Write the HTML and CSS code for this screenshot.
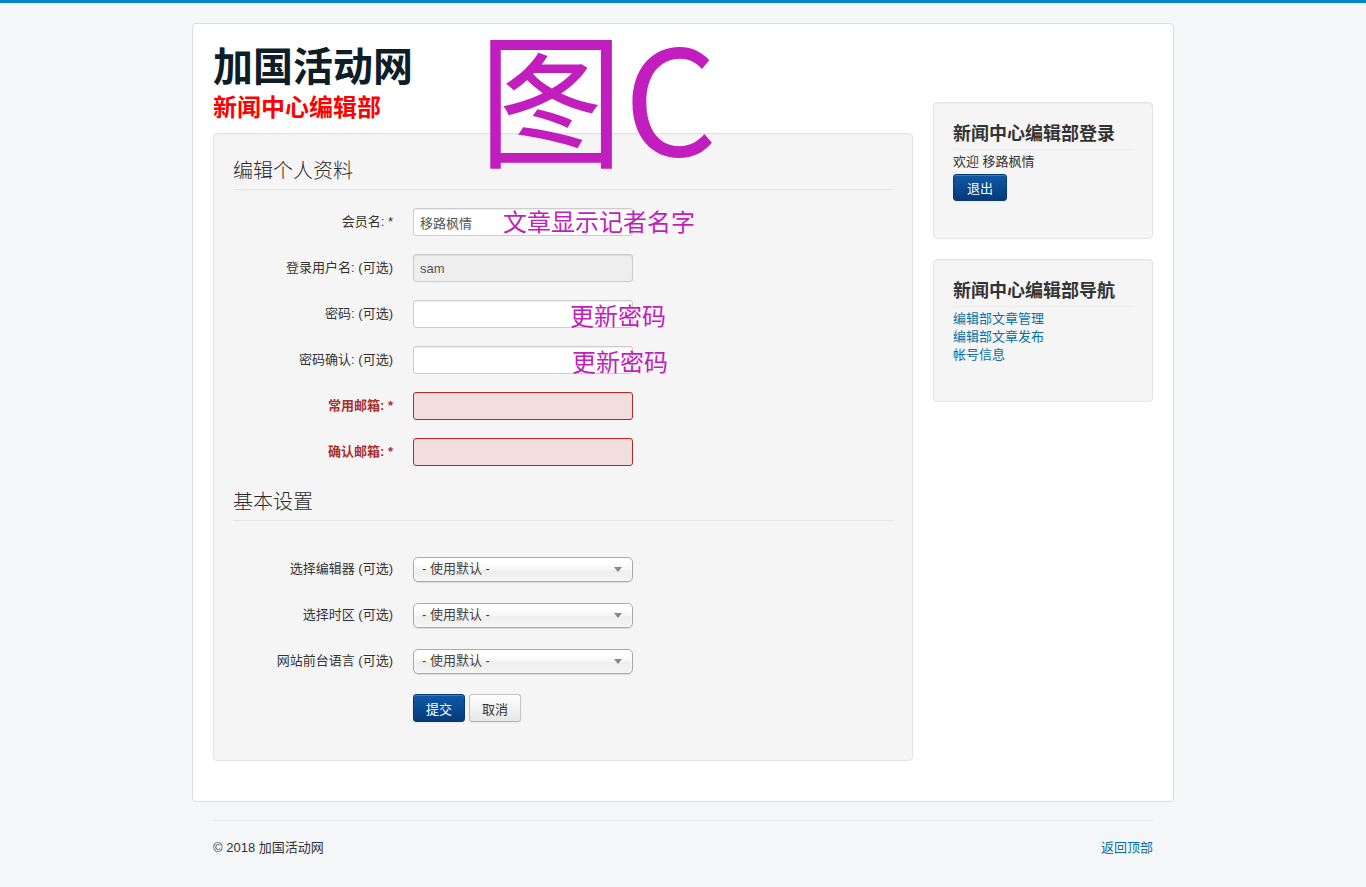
FILE: index.html
```html
<!DOCTYPE html>
<html lang="zh-CN">
<head>
  <meta charset="UTF-8">
  <meta name="viewport" content="width=device-width, initial-scale=1.0">
  <title>编辑个人资料 - 加国活动网</title>
  <link rel="stylesheet" href="styles.css">
</head>
<body>
  <div class="body">
    <div class="container">
      <div class="row">
        <main class="main">
          <header class="header">
            <div class="site-title">加国活动网</div>
            <div class="site-subtitle">新闻中心编辑部</div>
          </header>

          <form class="well form-horizontal">
            <fieldset>
              <legend>编辑个人资料</legend>
              <div class="control-group">
                <label class="control-label">会员名: *</label>
                <div class="controls"><input type="text" value="移路枫情"></div>
              </div>
              <div class="control-group">
                <label class="control-label">登录用户名: (可选)</label>
                <div class="controls"><input type="text" value="sam" disabled></div>
              </div>
              <div class="control-group">
                <label class="control-label">密码: (可选)</label>
                <div class="controls"><input type="password"></div>
              </div>
              <div class="control-group">
                <label class="control-label">密码确认: (可选)</label>
                <div class="controls"><input type="password"></div>
              </div>
              <div class="control-group error">
                <label class="control-label">常用邮箱: *</label>
                <div class="controls"><input type="text"></div>
              </div>
              <div class="control-group error">
                <label class="control-label">确认邮箱: *</label>
                <div class="controls"><input type="text"></div>
              </div>
            </fieldset>

            <fieldset class="settings">
              <legend>基本设置</legend>
              <div class="control-group">
                <label class="control-label">选择编辑器 (可选)</label>
                <div class="controls">
                  <div class="chzn-single"><span>- 使用默认 -</span><b class="arrow"></b></div>
                </div>
              </div>
              <div class="control-group">
                <label class="control-label">选择时区 (可选)</label>
                <div class="controls">
                  <div class="chzn-single"><span>- 使用默认 -</span><b class="arrow"></b></div>
                </div>
              </div>
              <div class="control-group">
                <label class="control-label">网站前台语言 (可选)</label>
                <div class="controls">
                  <div class="chzn-single"><span>- 使用默认 -</span><b class="arrow"></b></div>
                </div>
              </div>
            </fieldset>

            <div class="form-actions">
              <button type="button" class="btn btn-primary">提交</button>
              <button type="button" class="btn">取消</button>
            </div>
          </form>
        </main>

        <aside class="sidebar">
          <div class="well">
            <h3 class="page-header">新闻中心编辑部登录</h3>
            <div class="login-greeting">欢迎 移路枫情</div>
            <button type="button" class="btn btn-primary">退出</button>
          </div>
          <div class="well">
            <h3 class="page-header">新闻中心编辑部导航</h3>
            <ul class="nav-links">
              <li><a href="#">编辑部文章管理</a></li>
              <li><a href="#">编辑部文章发布</a></li>
              <li><a href="#">帐号信息</a></li>
            </ul>
          </div>
        </aside>
      </div>

      <!-- annotations drawn over the screenshot -->
      <div class="note note-big">图C</div>
      <div class="note note-name">文章显示记者名字</div>
      <div class="note note-pw1">更新密码</div>
      <div class="note note-pw2">更新密码</div>
    </div>
  </div>

  <footer class="footer">
    <hr>
    <div class="footer-row">
      <span>© 2018 加国活动网</span>
      <a href="#">返回顶部</a>
    </div>
  </footer>
</body>
</html>
```

FILE: styles.css
```css
body {
  margin: 0;
  background-color: #f4f6f7;
  border-top: 3px solid #0088cc;
  font-family: "Liberation Sans", "Noto Sans CJK SC", sans-serif;
  font-size: 13px;
  line-height: 18px;
  color: #333;
}
a {
  color: #0c6fa3;
  text-decoration: none;
}
.body {
  padding: 20px 0 0;
}
.container {
  position: relative;
  width: 940px;
  margin: 0 auto;
  padding: 20px;
  background-color: #fff;
  border: 1px solid #dedede;
  border-radius: 4px;
}
.row {
  display: flex;
  gap: 20px;
  align-items: flex-start;
}
.main {
  width: 700px;
}
.sidebar {
  width: 220px;
  margin-top: 58px;
}
/* header */
.site-title {
  font-size: 40px;
  line-height: 46px;
  font-weight: 700;
  color: #0e1d27;
}
.site-subtitle {
  font-size: 24px;
  line-height: 30px;
  font-weight: 700;
  color: #f00;
  margin-top: 3px;
  margin-bottom: 10px;
}
/* wells */
.well {
  background-color: #f5f5f5;
  border: 1px solid #e3e3e3;
  border-radius: 4px;
  padding: 19px;
  margin: 0 0 20px;
  box-shadow: inset 0 1px 1px rgba(0,0,0,0.03);
}
fieldset {
  border: 0;
  margin: 0;
  padding: 0;
}
legend {
  display: block;
  width: 100%;
  padding: 0;
  font-size: 20px;
  line-height: 36px;
  font-weight: 300;
  color: #2a2a2a;
  border-bottom: 1px solid #e5e5e5;
  margin-bottom: 18px;
}
.settings legend {
  margin-bottom: 34px;
}
.control-group {
  display: flex;
  align-items: center;
  height: 28px;
  margin-bottom: 18px;
}
.control-label {
  width: 160px;
  padding-right: 20px;
  text-align: right;
  color: #333;
}
.controls input {
  box-sizing: border-box;
  width: 220px;
  height: 28px;
  padding: 4px 6px;
  font-family: inherit;
  font-size: 13px;
  color: #555;
  background-color: #fff;
  border: 1px solid #ccc;
  border-radius: 3px;
  box-shadow: inset 0 1px 1px rgba(0,0,0,0.075);
  outline: none;
}
.controls input:disabled {
  background-color: #eee;
  color: #555;
}
.control-group.error .control-label {
  color: #a8302c;
  font-weight: 700;
}
.control-group.error input {
  border-color: #b02c26;
  background-color: #f2dede;
}
/* chosen style select */
.chzn-single {
  box-sizing: border-box;
  width: 220px;
  height: 25px;
  display: flex;
  align-items: center;
  justify-content: space-between;
  padding: 0 10px 0 8px;
  color: #444;
  border: 1px solid #aaa;
  border-radius: 5px;
  background: linear-gradient(#fff 20%, #f6f6f6 50%, #eee 52%, #f4f4f4 100%);
  box-shadow: inset 0 0 3px #fff, 0 1px 1px rgba(0,0,0,0.1);
}
.chzn-single .arrow {
  width: 0;
  height: 0;
  border-left: 4px solid transparent;
  border-right: 4px solid transparent;
  border-top: 5px solid #888;
}
.form-actions {
  display: flex;
  gap: 4px;
  padding-left: 180px;
  margin-top: 1px;
  margin-bottom: 19px;
}
/* buttons */
.btn {
  height: 28px;
  padding: 0 12px;
  font-family: inherit;
  font-size: 13px;
  color: #333;
  border: 1px solid #c5c5c5;
  border-bottom-color: #b3b3b3;
  border-radius: 3px;
  background: linear-gradient(#fff, #e6e6e6);
  box-shadow: inset 0 1px 0 rgba(255,255,255,0.2), 0 1px 2px rgba(0,0,0,0.05);
  cursor: pointer;
}
.btn-primary {
  color: #fff;
  border-color: #063a78;
  background: linear-gradient(#1059a8, #053a7a);
}
/* sidebar */
.page-header {
  margin: 0 0 3px;
  padding: 1px 0 4px;
  font-size: 18px;
  line-height: 22px;
  font-weight: 700;
  color: #333;
  border-bottom: 1px solid #eaeaea;
}
.login-greeting {
  margin-bottom: 3px;
}
.sidebar .btn-primary {
  height: 27px;
  padding: 0 13px;
  margin-bottom: 18px;
}
.nav-links {
  list-style: none;
  margin: 0 0 18px;
  padding: 0;
}
/* overlay notes */
.note {
  position: absolute;
  color: #c21dbd;
  font-family: "Noto Sans CJK SC", sans-serif;
  white-space: nowrap;
}
.note-big {
  left: 285px;
  top: -4px;
  font-size: 146px;
  line-height: 146px;
}
.note-name {
  left: 310px;
  top: 181px;
  font-size: 24px;
  line-height: 32px;
}
.note-pw1 {
  left: 377px;
  top: 275px;
  font-size: 24px;
  line-height: 32px;
}
.note-pw2 {
  left: 379px;
  top: 321px;
  font-size: 24px;
  line-height: 32px;
}
/* footer */
.footer {
  width: 940px;
  margin: 0 auto;
  padding-top: 18px;
}
.footer hr {
  margin: 0 0 18px;
  border: 0;
  border-top: 1px solid #e6e9ea;
}
.footer-row {
  display: flex;
  justify-content: space-between;
  padding-bottom: 30px;
}
```
